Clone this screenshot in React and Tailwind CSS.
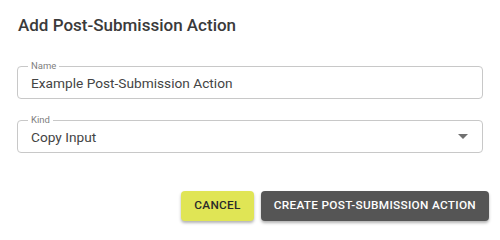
import React from 'react';

function OutlinedField({ label, value, select }) {
  return (
    <div className="relative h-[33px] rounded-[4px] border border-[#c8c8c8] pl-[13px] pr-[14px] flex items-center">
      <span className="absolute left-[10px] top-[-6px] bg-white px-[3px] text-[9.5px] leading-[10px] text-[#808080]">
        {label}
      </span>
      <span className="flex-1 text-[13.7px] leading-[16px] text-[#444444]">{value}</span>
      {select && (
        <svg width="10" height="5" viewBox="0 0 10 5">
          <path d="M0 0 L10 0 L5 5 Z" fill="#707070" />
        </svg>
      )}
    </div>
  );
}

export default function App() {
  return (
    <div className="w-[500px] h-[233px] bg-white overflow-hidden font-['Roboto',sans-serif]">
      <h2 className="pl-[18px] pt-[14px] text-[17px] leading-[22px] font-medium text-[#3a3a3a]">
        Add Post-Submission Action
      </h2>
      <div className="pl-[17px] mt-[30px] flex flex-col gap-[21px] w-[483px]">
        <OutlinedField label="Name" value="Example Post-Submission Action" />
        <OutlinedField label="Kind" value="Copy Input" select />
      </div>
      <div className="flex justify-end gap-[7px] pr-[11px] mt-[38px]">
        <button className="h-[30px] px-[13px] rounded-[4px] bg-[#e0e555] text-[#2a2a2a] text-[11.8px] font-medium tracking-[0.3px] uppercase shadow-[0_2px_3px_rgba(0,0,0,0.3)]">
          Cancel
        </button>
        <button className="h-[30px] px-[13px] rounded-[4px] bg-[#555555] text-white text-[11.8px] font-medium tracking-[0.3px] uppercase shadow-[0_2px_3px_rgba(0,0,0,0.3)]">
          Create Post-Submission Action
        </button>
      </div>
    </div>
  );
}
